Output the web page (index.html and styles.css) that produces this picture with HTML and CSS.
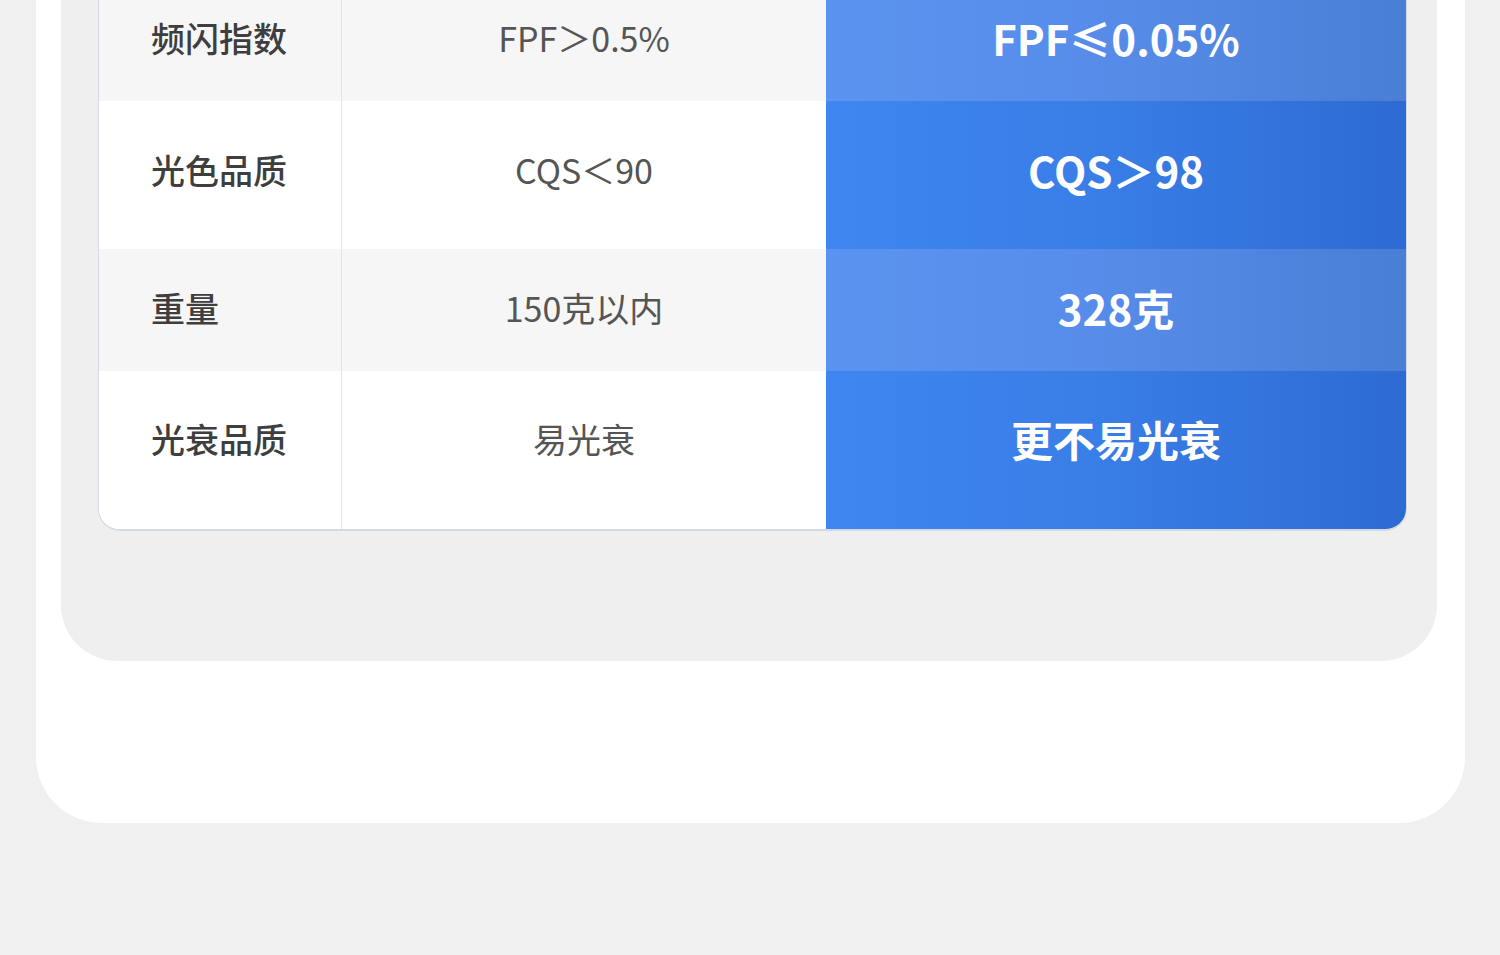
FILE: index.html
```html
<!DOCTYPE html>
<html lang="zh-CN">
<head>
<meta charset="utf-8">
<title>参数对比</title>
<link rel="stylesheet" href="styles.css">
</head>
<body>
<div class="card">
  <div class="panel">
    <div class="table">
      <div class="row alt r1">
        <div class="cell name">频闪指数</div>
        <div class="cell other">FPF＞0.5%</div>
        <div class="cell ours">FPF≤0.05%</div>
      </div>
      <div class="row r2">
        <div class="cell name">光色品质</div>
        <div class="cell other">CQS＜90</div>
        <div class="cell ours">CQS＞98</div>
      </div>
      <div class="row alt r3">
        <div class="cell name">重量</div>
        <div class="cell other">150克以内</div>
        <div class="cell ours">328克</div>
      </div>
      <div class="row r4">
        <div class="cell name">光衰品质</div>
        <div class="cell other">易光衰</div>
        <div class="cell ours">更不易光衰</div>
      </div>
    </div>
  </div>
</div>
</body>
</html>
```

FILE: styles.css
```css
html, body {
  margin: 0;
  padding: 0;
}
body {
  background: #f0f0f0;
  width: 1500px;
  height: 955px;
  overflow: hidden;
  font-family: "Noto Sans CJK SC", "Noto Sans", sans-serif;
}
.card {
  margin: -21px 0 0 36px;
  width: 1429px;
  box-sizing: border-box;
  padding: 0 28px 162px 25px;
  background: #ffffff;
  border-radius: 0 0 66px 66px;
}
.panel {
  background: #efefef;
  padding: 0 30px 130px 37px;
  border-radius: 0 0 56px 56px;
}
.table {
  border: 1px solid #d4dae4;
  border-top: none;
  border-bottom-width: 2px;
  border-radius: 0 0 22px 22px;
  overflow: hidden;
  background: #ffffff;
}
.row {
  display: grid;
  grid-template-columns: 243px 484px 1fr;
  background: #ffffff;
}
.row.alt {
  background: #f6f6f6;
}
.r1 { height: 122px; }
.r2 { height: 148px; }
.r3 { height: 122px; }
.r4 { height: 158px; }
.cell {
  display: flex;
  align-items: center;
  padding-bottom: 6px;
}
.name {
  padding-left: 52px;
  font-size: 34px;
  font-weight: 500;
  color: #3e3e3e;
  border-right: 1px solid #e4e4e4;
}
.other {
  justify-content: center;
  font-size: 34px;
  color: #555555;
}
.ours {
  justify-content: center;
  font-size: 42px;
  font-weight: 700;
  color: #ffffff;
  background: linear-gradient(90deg, #3f86f0 0%, #3a7ee8 45%, #2d6bd3 100%);
}
.alt .ours {
  background: linear-gradient(90deg, #5b94f0 0%, #578cea 45%, #4a7fd6 100%);
}
.r2 .cell { padding-bottom: 12px; }
.r4 .cell { padding-bottom: 24px; }
```
